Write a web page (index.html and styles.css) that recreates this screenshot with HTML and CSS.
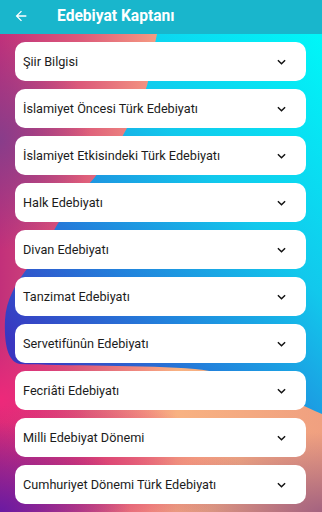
FILE: index.html
```html
<!DOCTYPE html>
<html lang="tr">
<head>
    <meta charset="UTF-8">
    <meta name="viewport" content="width=device-width, initial-scale=1.0">
    <title>Edebiyat Kaptanı</title>
    <link rel="stylesheet" href="styles.css">
</head>
<body>
    <svg class="backdrop" viewBox="0 0 322 512" preserveAspectRatio="none" aria-hidden="true">
        <defs>
            <linearGradient id="blobFill" gradientUnits="userSpaceOnUse" x1="322" y1="40" x2="0" y2="330">
                <stop offset="0" stop-color="#00f6f8"/>
                <stop offset="0.4" stop-color="#12c8ec"/>
                <stop offset="0.7" stop-color="#2282dc"/>
                <stop offset="1" stop-color="#3a36c0"/>
            </linearGradient>
        </defs>
        <path fill="url(#blobFill)" d="M157,0 L322,0 L322,414 C290,400 235,372 195,369 C150,365 60,366 20,364 C8,362 4,345 5,320 C6,300 16,282 30,265 C40,252 50,238 57,225 C70,205 82,192 95,177 C108,160 118,145 127,128 C140,105 148,90 150,70 C152,55 155,44 157,34 Z"/>
    </svg>

    <header class="appBar">
        <svg class="backIcon" viewBox="0 0 24 24" width="16" height="16">
            <path d="M20 11H7.83l5.59-5.59L12 4l-8 8 8 8 1.41-1.41L7.83 13H20v-2z" fill="#fff"/>
        </svg>
        <h1 class="appTitle">Edebiyat Kaptanı</h1>
    </header>

    <main class="topicList">
        <div class="topicCard"><span>Şiir Bilgisi</span><svg class="chevron" viewBox="0 0 10 6"><polyline points="1,1 5,5 9,1"/></svg></div>
        <div class="topicCard"><span>İslamiyet Öncesi Türk Edebiyatı</span><svg class="chevron" viewBox="0 0 10 6"><polyline points="1,1 5,5 9,1"/></svg></div>
        <div class="topicCard"><span>İslamiyet Etkisindeki Türk Edebiyatı</span><svg class="chevron" viewBox="0 0 10 6"><polyline points="1,1 5,5 9,1"/></svg></div>
        <div class="topicCard"><span>Halk Edebiyatı</span><svg class="chevron" viewBox="0 0 10 6"><polyline points="1,1 5,5 9,1"/></svg></div>
        <div class="topicCard"><span>Divan Edebiyatı</span><svg class="chevron" viewBox="0 0 10 6"><polyline points="1,1 5,5 9,1"/></svg></div>
        <div class="topicCard"><span>Tanzimat Edebiyatı</span><svg class="chevron" viewBox="0 0 10 6"><polyline points="1,1 5,5 9,1"/></svg></div>
        <div class="topicCard"><span>Servetifünûn Edebiyatı</span><svg class="chevron" viewBox="0 0 10 6"><polyline points="1,1 5,5 9,1"/></svg></div>
        <div class="topicCard"><span>Fecriâti Edebiyatı</span><svg class="chevron" viewBox="0 0 10 6"><polyline points="1,1 5,5 9,1"/></svg></div>
        <div class="topicCard"><span>Milli Edebiyat Dönemi</span><svg class="chevron" viewBox="0 0 10 6"><polyline points="1,1 5,5 9,1"/></svg></div>
        <div class="topicCard"><span>Cumhuriyet Dönemi Türk Edebiyatı</span><svg class="chevron" viewBox="0 0 10 6"><polyline points="1,1 5,5 9,1"/></svg></div>
    </main>
</body>
</html>
```

FILE: styles.css
```css
body {
    margin: 0;
    padding: 0;
    height: 512px;
    position: relative;
    overflow: hidden;
    font-family: Roboto, "Liberation Sans", sans-serif;
    background:
        radial-gradient(ellipse 130px 90px at 0 512px, #6a1aa2 0%, rgba(106, 26, 162, 0) 100%),
        radial-gradient(ellipse 170px 70px at 70px 470px, rgba(214, 40, 112, 0.75), rgba(214, 40, 112, 0)),
        radial-gradient(ellipse 90px 70px at 0 400px, rgba(242, 40, 122, 0.9), rgba(242, 40, 122, 0)),
        radial-gradient(ellipse 90px 110px at 0 140px, rgba(130, 62, 140, 0.9), rgba(130, 62, 140, 0)),
        radial-gradient(ellipse 170px 80px at 322px 512px, rgba(156, 92, 128, 0.9), rgba(156, 92, 128, 0)),
        linear-gradient(to right, #c2307a 0%, #dc5a7a 25%, #f29080 45%, #f8b282 55%, #f0a080 100%);
}

.backdrop {
    position: absolute;
    top: 0;
    left: 0;
    width: 322px;
    height: 512px;
    z-index: 0;
}

.appBar {
    position: relative;
    z-index: 1;
    height: 34px;
    display: flex;
    align-items: center;
    background-color: #19b6cc;
    padding-left: 13px;
    box-sizing: border-box;
}

.backIcon {
    display: block;
    margin-top: -2px;
}

.appTitle {
    margin: -2px 0 0 28px;
    font-size: 15.6px;
    font-weight: 700;
    color: #fff;
}

.topicList {
    position: relative;
    z-index: 1;
    display: flex;
    flex-direction: column;
    gap: 8px;
    padding: 8px 16px 0 15px;
}

.topicCard {
    height: 39px;
    display: flex;
    align-items: center;
    justify-content: space-between;
    background-color: #fff;
    border-radius: 10px;
    padding: 0 20px 0 8px;
    font-size: 12.7px;
    color: #1c1c1c;
}

.chevron {
    width: 9px;
    height: 6px;
    overflow: visible;
}

.chevron polyline {
    fill: none;
    stroke: #111;
    stroke-width: 1.6;
}
```
